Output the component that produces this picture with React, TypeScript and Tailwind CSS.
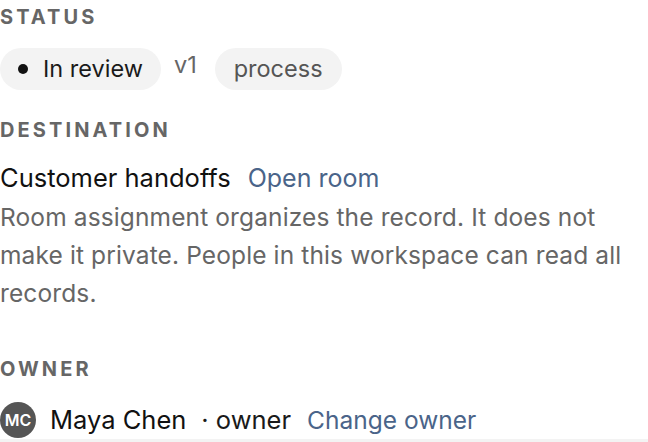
import React from 'react';

const Label = ({ children }: { children: React.ReactNode }) => (
  <div className="text-[20px] leading-[24px] font-bold tracking-[0.155em] text-[#666666] uppercase">
    {children}
  </div>
);

const App = () => {
  return (
    <div className="min-h-screen bg-white text-[#1a1a1a] font-['Inter',sans-serif] flex flex-col">
      <div className="flex flex-col pt-[5px]">
        {/* Status */}
        <Label>Status</Label>
        <div className="flex items-center mt-[19px]">
          <span className="inline-flex items-center gap-[15px] h-[42px] pl-[18px] pr-[18px] rounded-full bg-[#f3f3f3] text-[23.5px] text-[#1a1a1a]">
            <span className="w-[10px] h-[10px] rounded-full bg-[#111111]" />
            In review
          </span>
          <span className="ml-[13px] text-[23.5px] text-[#666666] -mt-[8px]">v1</span>
          <span className="ml-[18px] inline-flex items-center h-[42px] px-[19px] rounded-full bg-[#f3f3f3] text-[23.5px] text-[#555555]">
            process
          </span>
        </div>

        {/* Destination */}
        <div className="mt-[28px]">
          <Label>Destination</Label>
        </div>
        <div className="flex items-baseline gap-[17px] mt-[21px] text-[25.5px] leading-[30px]">
          <span className="text-[#111111]">Customer handoffs</span>
          <span className="text-[25px] text-[#4a6489]">Open room</span>
        </div>
        <p className="mt-[5px] text-[24.5px] leading-[38px] tracking-[0.005em] text-[#666666] max-w-[640px]">
          Room assignment organizes the record. It does not make it private. People in this workspace can read all records.
        </p>

        {/* Owner */}
        <div className="mt-[45px]">
          <Label>Owner</Label>
        </div>
        <div className="flex items-center mt-[20px] h-[38px] text-[25.5px]">
          <span className="w-[36px] h-[36px] rounded-full bg-[#555555] text-white text-[16px] font-semibold flex items-center justify-center">
            MC
          </span>
          <span className="ml-[14px] text-[#111111]">Maya Chen</span>
          <span className="ml-[15px] text-[#1a1a1a]">· owner</span>
          <span className="ml-[16px] text-[24.5px] text-[#4a6489]">Change owner</span>
        </div>
      </div>
      <div className="mt-auto h-[3px] bg-[#f3f3f3]" />
    </div>
  );
};

export default App;
